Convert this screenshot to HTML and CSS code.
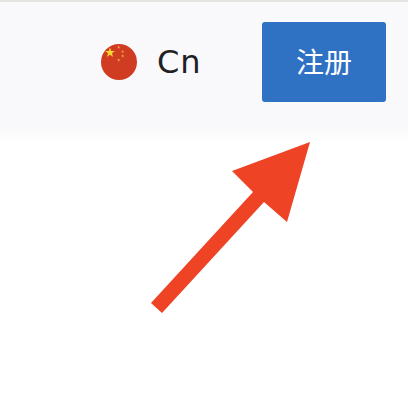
FILE: index.html
```html
<!DOCTYPE html>
<html lang="zh">
<head>
<meta charset="utf-8">
<title>注册</title>
<link rel="stylesheet" href="styles.css">
</head>
<body>
<header class="topbar">
  <div class="lang">
    <svg class="flag" viewBox="0 0 36 36" aria-hidden="true">
      <defs>
        <polygon id="star" points="0,-1 0.24,-0.31 0.95,-0.31 0.38,0.12 0.59,0.81 0,0.38 -0.59,0.81 -0.38,0.12 -0.95,-0.31 -0.24,-0.31"/>
      </defs>
      <circle cx="18" cy="18" r="18" fill="#cf3c22"/>
      <use href="#star" fill="#f6d32d" transform="translate(9 8.7) scale(5.2)"/>
      <use href="#star" fill="#eeb13a" transform="translate(17.7 3.3) scale(1.7)"/>
      <use href="#star" fill="#eeb13a" transform="translate(21.7 7.7) scale(1.7)"/>
      <use href="#star" fill="#eeb13a" transform="translate(21.7 12) scale(1.7)"/>
      <use href="#star" fill="#eeb13a" transform="translate(17.7 16) scale(1.7)"/>
    </svg>
    <span class="lang-name">Cn</span>
  </div>
  <a class="signup" href="#">注册</a>
</header>
<svg class="arrow" viewBox="0 0 408 262" aria-hidden="true">
  <polygon fill="#ee4325" points="310,-4 232,25 253,46 151,157 162,167 264,56 287,76"/>
</svg>
</body>
</html>
```

FILE: styles.css
```css
html, body {
  margin: 0;
  padding: 0;
  background: #fff;
}
body {
  width: 408px;
  height: 408px;
  overflow: hidden;
  font-family: "DejaVu Sans", "Noto Sans CJK SC", sans-serif;
}
.topbar {
  box-sizing: border-box;
  height: 146px;
  padding: 20px 22px 44px 0;
  border-top: 2px solid #e3e3e0;
  background: linear-gradient(to bottom, #f9f9fb 0, #f9f9fb 122px, #fff 142px);
  display: flex;
  justify-content: flex-end;
  align-items: stretch;
}
.lang {
  display: flex;
  align-items: center;
  gap: 20px;
  margin-right: 61px;
}
.flag {
  width: 36px;
  height: 36px;
  flex: none;
}
.lang-name {
  font-size: 32px;
  color: #1f2023;
  letter-spacing: 1px;
  width: 44px;
  white-space: nowrap;
}
.signup {
  width: 124px;
  border-radius: 3px;
  background: #2f72c4;
  color: #fff;
  font-family: "Noto Sans CJK SC", sans-serif;
  font-size: 28px;
  text-decoration: none;
  display: flex;
  align-items: center;
  justify-content: center;
  padding-bottom: 2px;
  box-sizing: border-box;
}
.arrow {
  display: block;
  width: 408px;
  height: 262px;
  overflow: visible;
}
```
